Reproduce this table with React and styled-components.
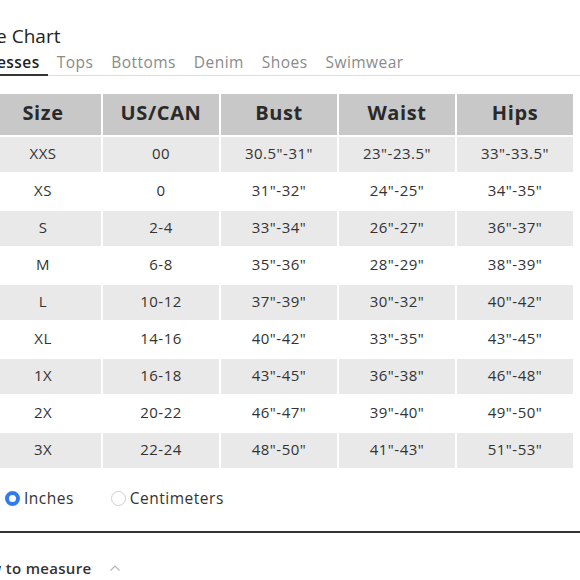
import { useState } from "react";
import styled, { createGlobalStyle } from "styled-components";

const GlobalStyle = createGlobalStyle`
  body {
    margin: 0;
    background: #ffffff;
    overflow: hidden;
    font-family: "Open Sans", "Liberation Sans", sans-serif;
    color: #333333;
  }
`;

const tabs = ["Dresses", "Tops", "Bottoms", "Denim", "Shoes", "Swimwear"];

const columns = ["Size", "US/CAN", "Bust", "Waist", "Hips"];

const rows = [
  ["XXS", "00", "30.5\"-31\"", "23\"-23.5\"", "33\"-33.5\""],
  ["XS", "0", "31\"-32\"", "24\"-25\"", "34\"-35\""],
  ["S", "2-4", "33\"-34\"", "26\"-27\"", "36\"-37\""],
  ["M", "6-8", "35\"-36\"", "28\"-29\"", "38\"-39\""],
  ["L", "10-12", "37\"-39\"", "30\"-32\"", "40\"-42\""],
  ["XL", "14-16", "40\"-42\"", "33\"-35\"", "43\"-45\""],
  ["1X", "16-18", "43\"-45\"", "36\"-38\"", "46\"-48\""],
  ["2X", "20-22", "46\"-47\"", "39\"-40\"", "49\"-50\""],
  ["3X", "22-24", "48\"-50\"", "41\"-43\"", "51\"-53\""],
];

const SizeChart = () => {
  const [activeTab, setActiveTab] = useState("Dresses");
  const [unit, setUnit] = useState("in");

  return (
    <Page>
      <Title>Size Chart</Title>

      <TabBar>
        {tabs.map((tab) => (
          <Tab
            key={tab}
            $active={activeTab === tab}
            onClick={() => setActiveTab(tab)}
          >
            {tab}
          </Tab>
        ))}
      </TabBar>

      <Table>
        <colgroup>
          {columns.map((c) => (
            <col key={c} style={{ width: 116 }} />
          ))}
        </colgroup>
        <thead>
          <tr>
            {columns.map((c) => (
              <HeadCell key={c}>{c}</HeadCell>
            ))}
          </tr>
        </thead>
        <tbody>
          {rows.map((row, i) => (
            <tr key={row[0]}>
              {row.map((v, j) => (
                <Cell key={j} $shaded={i % 2 === 0}>
                  {v}
                </Cell>
              ))}
            </tr>
          ))}
        </tbody>
      </Table>

      <UnitRow>
        <UnitOption onClick={() => setUnit("in")}>
          <Radio $checked={unit === "in"} />
          Inches
        </UnitOption>
        <UnitOption onClick={() => setUnit("cm")}>
          <Radio $checked={unit === "cm"} />
          Centimeters
        </UnitOption>
      </UnitRow>

      <Divider />

      <MeasureToggle>
        How to measure
        <svg width="12" height="8" viewBox="0 0 12 8">
          <path
            d="M1.5 6.5 L6 2 L10.5 6.5"
            fill="none"
            stroke="#b8b8b8"
            strokeWidth="1.2"
          />
        </svg>
      </MeasureToggle>
    </Page>
  );
};

export default function App() {
  return (
    <>
      <GlobalStyle />
      <SizeChart />
    </>
  );
}

/* styled */
const Page = styled.div`
  margin-left: -28px;
  width: 620px;
  padding-top: 24px;
`;

const Title = styled.h1`
  margin: 0;
  font-size: 19px;
  line-height: 24px;
  font-weight: 500;
  color: #222222;
`;

const TabBar = styled.div`
  display: flex;
  margin-top: 5px;
  padding-left: 0;
  margin-left: -3px;
  border-bottom: 1px solid #dddddd;
`;

const Tab = styled.div`
  padding: 0 ${({ $active }) => ($active ? "8px" : "9px")} 2px 9px;
  font-size: 15.5px;
  line-height: 19px;
  letter-spacing: 0.45px;
  cursor: pointer;
  color: ${({ $active }) => ($active ? "#222222" : "#8a8a8a")};
  font-weight: ${({ $active }) => ($active ? 600 : 500)};
  border-bottom: 2px solid ${({ $active }) => ($active ? "#333333" : "transparent")};
  margin-bottom: -1px;
`;

const Table = styled.table`
  margin: 16px 0 0 11px;
  table-layout: fixed;
  width: 592px;
  border-collapse: separate;
  border-spacing: 2px;
`;

const HeadCell = styled.th`
  height: 41px;
  padding: 0 0 3px;
  box-sizing: border-box;
  background: #c8c8c8;
  color: #2a2a2a;
  font-size: 20px;
  line-height: 22px;
  letter-spacing: 0.6px;
  font-weight: 700;
  text-align: center;
`;

const Cell = styled.td`
  height: 35px;
  padding: 0 0 3px;
  box-sizing: border-box;
  background: ${({ $shaded }) => ($shaded ? "#e9e9e9" : "#ffffff")};
  color: #333333;
  font-size: 15px;
  line-height: 18px;
  letter-spacing: 0.5px;
  text-align: center;
`;

const UnitRow = styled.div`
  display: flex;
  align-items: center;
  gap: 37px;
  margin-top: 18px;
  padding-left: 33px;
  height: 20px;
`;

const UnitOption = styled.label`
  display: flex;
  align-items: center;
  gap: 4px;
  font-size: 15.5px;
  letter-spacing: 0.5px;
  color: #333333;
  cursor: pointer;
`;

const Radio = styled.span`
  width: 15px;
  height: 15px;
  box-sizing: border-box;
  border-radius: 50%;
  border: ${({ $checked }) => ($checked ? "4px solid #2e7cf0" : "1px solid #cfcfcf")};
  background: #ffffff;
`;

const Divider = styled.hr`
  margin: 23px 0 0;
  border: none;
  height: 2px;
  background: #333333;
`;

const MeasureToggle = styled.div`
  display: flex;
  align-items: center;
  gap: 18px;
  margin: 26px 0 0 -4px;
  font-size: 15px;
  line-height: 18px;
  letter-spacing: 0.3px;
  font-weight: 600;
  color: #333333;
`;
